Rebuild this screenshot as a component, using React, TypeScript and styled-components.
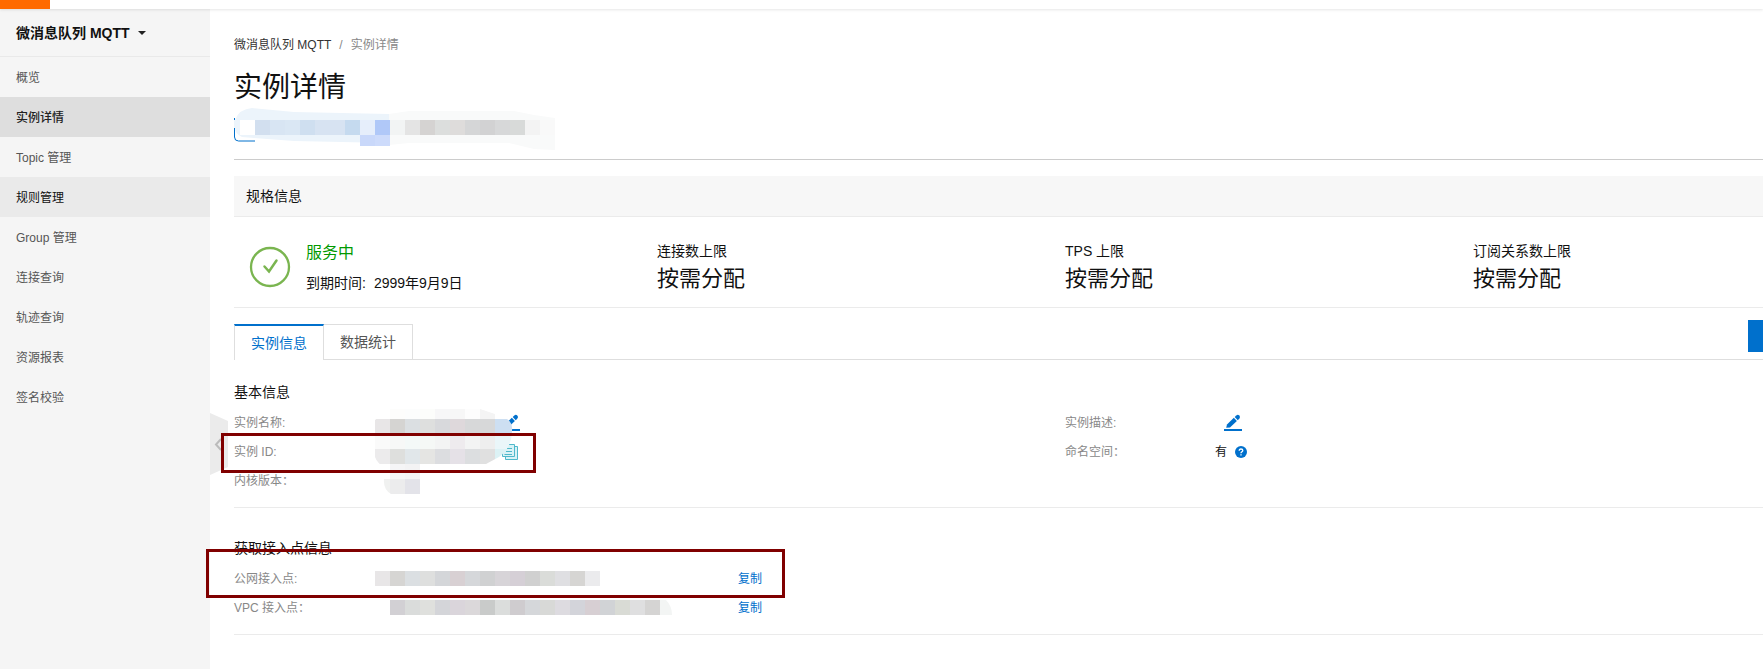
import React from "react";
import styled, { createGlobalStyle } from "styled-components";

const GlobalStyle = createGlobalStyle`
  * { box-sizing: border-box; }
  body {
    margin: 0;
    background: #fff;
    color: #111;
    font: 12px/20px "Liberation Sans", "Noto Sans CJK SC", sans-serif;
  }
  button { font: inherit; border: 0; padding: 0; background: none; cursor: pointer; }
  a { text-decoration: none; }
`;

const Page = styled.div`
  min-height: 100vh;
  display: flex;
  flex-direction: column;
  overflow: hidden;
`;

const TopBar = styled.header`
  height: 9px;
  flex: none;
  position: relative;
  z-index: 1;
  background: #fff;
  box-shadow: 0 1px 3px rgba(0, 0, 0, 0.1);
`;

const Brand = styled.div`
  width: 50px;
  height: 9px;
  background: #ff6a00;
`;

const Body = styled.div`
  flex: 1;
  display: flex;
  min-width: 1920px;
`;

const Sidebar = styled.nav`
  width: 210px;
  flex: none;
  background: #f5f5f5;
`;

const ProductSwitch = styled.button`
  width: 100%;
  height: 48px;
  padding: 0 16px;
  display: flex;
  align-items: center;
  gap: 8px;
  border-bottom: 1px solid #e9e9e9;
  color: #111;
  font-size: 14px;
  font-weight: 700;
`;

const NavLink = styled.a<{ $state?: "active" | "hover" }>`
  display: block;
  height: 40px;
  padding: 0 16px;
  line-height: 42px;
  color: ${(p) => (p.$state === "active" ? "#222" : p.$state ? "#111" : "#555")};
  font-weight: ${(p) => (p.$state === "active" ? 500 : 400)};
  background: ${(p) => (p.$state === "active" ? "#dedede" : p.$state ? "#eaeaea" : "none")};
`;

const Main = styled.main`
  flex: 1;
  min-width: 0;
  padding: 26px 24px 0;
  position: relative;
`;

const Collapse = styled.button`
  position: absolute;
  left: 0;
  top: 404px;
  width: 20px;
  height: 62px;
`;

const Breadcrumb = styled.nav`
  display: flex;
  gap: 8px;
  color: #888;
  a { color: #333; }
`;

const Title = styled.h1`
  margin: 14px 0 0;
  font-size: 28px;
  line-height: 38px;
  font-weight: 400;
`;

const InstanceBar = styled.div`
  height: 53px;
  border-bottom: 1px solid #ccc;
  svg { display: block; }
`;

const PanelTitle = styled.h2`
  margin: 16px 0 0;
  height: 41px;
  padding: 0 12px;
  background: #f7f7f7;
  border-bottom: 1px solid #ebebeb;
  font-size: 14px;
  line-height: 40px;
  font-weight: 400;
`;

const Stats = styled.section`
  display: grid;
  grid-template-columns: repeat(4, 1fr);
  height: 91px;
  padding: 24px 15px 0;
  border-bottom: 1px solid #ebebeb;
`;

const Status = styled.div`
  display: flex;
  gap: 15px;
  > svg { margin-top: 5px; flex: none; }
`;

const StatusName = styled.div`
  color: #090;
  font-size: 16px;
  line-height: 24px;
`;

const Expiry = styled.div`
  margin-top: 8px;
  font-size: 14px;
  line-height: 20px;
  display: flex;
  gap: 8px;
`;

const StatLabel = styled.div`
  font-size: 14px;
  line-height: 20px;
`;

const StatValue = styled.div`
  font-size: 22px;
  line-height: 36px;
`;

const TabBar = styled.div`
  margin-top: 12px;
  height: 40px;
  display: flex;
  justify-content: space-between;
  border-bottom: 1px solid #dedede;
`;

const TabList = styled.div`
  display: flex;
  margin-top: 4px;
`;

const Tab = styled.button<{ $active?: boolean }>`
  height: ${(p) => (p.$active ? 36 : 35)}px;
  padding: 0 16px 0 ${(p) => (p.$active ? 16 : 16)}px;
  font-size: 14px;
  color: ${(p) => (p.$active ? "#0070cc" : "#555")};
  background: #fff;
  border-right: 1px solid #dedede;
  border-left: ${(p) => (p.$active ? "1px solid #dedede" : "0")};
  border-top: ${(p) => (p.$active ? "2px solid #0070cc" : "1px solid #dedede")};
`;

const PrimaryButton = styled.button`
  width: 148px;
  height: 32px;
  background: #0070cc;
`;

const Section = styled.section<{ $gap: number }>`
  position: relative;
  padding: ${(p) => p.$gap}px 0 12px;
  border-bottom: 1px solid #ebebeb;
`;

const SectionTitle = styled.h3`
  margin: 0 0 6px;
  font-size: 14px;
  line-height: 20px;
  font-weight: 400;
`;

const InfoGrid = styled.dl`
  margin: 0;
  display: grid;
  grid-template-columns: 1fr 1fr;
`;

const EndpointList = styled.dl`
  margin: 0;
`;

const Field = styled.div`
  height: 29px;
  display: flex;
  align-items: center;
`;

const Label = styled.dt`
  width: 150px;
  flex: none;
  color: #888;
  line-height: 22px;
`;

const Value = styled.dd<{ $indent?: number }>`
  margin: 0;
  padding-left: ${(p) => p.$indent ?? 0}px;
  display: flex;
  align-items: center;
  gap: 8px;
`;

const IconButton = styled.button`
  display: flex;
`;

const EndpointLabel = styled(Label)`
  width: 141px;
`;

const Endpoint = styled.div`
  width: 355px;
  svg { display: block; }
`;

const CopyLink = styled.button`
  color: #0070cc;
`;

const Redaction = styled.svg`
  position: absolute;
  left: 141px;
  top: 49px;
  pointer-events: none;
`;

const Marker = styled.div<{ $x: number; $y: number; $w: number; $h: number }>`
  position: absolute;
  left: ${(p) => p.$x}px;
  top: ${(p) => p.$y}px;
  width: ${(p) => p.$w}px;
  height: ${(p) => p.$h}px;
  border: 3px solid #800000;
  pointer-events: none;
`;

const Cells = ({ x = 0, y, h = 15, colors }: { x?: number; y: number; h?: number; colors: string[] }) => (
  <g shapeRendering="crispEdges">
    {colors.map((c, i) => (
      <rect key={i} x={x + i * 15} y={y} width={15} height={h} fill={c} />
    ))}
  </g>
);

const Pencil = () => (
  <svg width="18" height="18" viewBox="0 0 18 18" fill="#0070cc" aria-hidden="true">
    <path d="M2.2 13.8 3 10.400 9.800 3.800 12.900 6.900 6 13.400Z" />
    <path d="M10.700 3.100 12.300 1.500Q13.900.2 15.300 1.600 16.700 3 15.400 4.600L13.800 6.200Z" />
    <rect y="15" width="18" height="2" />
  </svg>
);

const CopyIcon = () => (
  <svg width="16" height="16" viewBox="0 0 16 16" fill="#d9f2f6" stroke="#4fb9cb" aria-hidden="true">
    <path d="M6.500 2.500h9v13h-12v-4z" />
    <path d="M.5 4.500 4.500.5h8v12H.5z" />
    <path d="M5 4.500h5M4 7.500h6M2.500 10.500h7.500" fill="none" />
  </svg>
);

const navItems: { label: string; state?: "active" | "hover" }[] = [
  { label: "概览" },
  { label: "实例详情", state: "active" },
  { label: "Topic 管理" },
  { label: "规则管理", state: "hover" },
  { label: "Group 管理" },
  { label: "连接查询" },
  { label: "轨迹查询" },
  { label: "资源报表" },
  { label: "签名校验" },
];

const limits = ["连接数上限", "TPS 上限", "订阅关系数上限"];

export default function App() {
  return (
    <Page>
      <GlobalStyle />
      <TopBar>
        <Brand />
      </TopBar>
      <Body>
        <Sidebar>
          <ProductSwitch>
            微消息队列 MQTT
            <svg width="8" height="4" viewBox="0 0 8 4" aria-hidden="true">
              <path d="M0 0h8L4 4z" fill="#222" />
            </svg>
          </ProductSwitch>
          {navItems.map((n) => (
            <NavLink key={n.label} href="#" $state={n.state}>
              {n.label}
            </NavLink>
          ))}
        </Sidebar>
        <Main>
          <Collapse aria-label="收起菜单">
            <svg width="20" height="62" viewBox="0 0 20 62">
              <path d="M0 0 18 8V54L0 62z" fill="#ebebeb" />
              <path d="M11 26 6 31.500 11 37" fill="none" stroke="#bbb" strokeWidth="2" />
            </svg>
          </Collapse>
          <Breadcrumb>
            <a href="#">微消息队列 MQTT</a>
            <span>/</span>
            <span>实例详情</span>
          </Breadcrumb>
          <Title>实例详情</Title>
          <InstanceBar>
            <svg width="324" height="46" viewBox="0 0 324 46" aria-hidden="true">
              <path d="M.5 11v19q0 4 4 4H21" fill="none" stroke="#0070cc" />
              <path d="M0 13H1Q5 2 18 1L60 5 155 7V36L60 34 20 31 8 30Q1 27 1 21H0z" fill="#ecf4fb" />
              <path d="M155 7 175 4H280L300 8 321 11V43L300 42 275 36H175L155 38z" fill="#f9fafa" />
              <Cells x={6} y={13} colors={["#fff", "#d2dfef", "#d8e5f3", "#dae7f4", "#cfdff0", "#d7e3f2", "#d7e3f2", "#c5daef", "#e6eefb", "#b0c8f8", "#f2f4f4", "#e4e4e4", "#d5d3d2", "#dcdedd", "#dedcdb", "#d5d6d7", "#d2d2d3", "#d7d8d9", "#d8dad9", "#f3f3f3", "#f9f9f9"]} />
              <Cells x={126} y={28} h={11} colors={["#c9d8fa", "#cddbfb"]} />
            </svg>
          </InstanceBar>
          <PanelTitle>规格信息</PanelTitle>
          <Stats>
            <Status>
              <svg width="42" height="42" viewBox="0 0 42 42" fill="none" stroke="#7ab550" aria-hidden="true">
                <circle cx="21" cy="21" r="19" strokeWidth="2.300" />
                <path d="M15.500 20.500 20 25.500 27.500 14.500" strokeWidth="2.500" strokeLinecap="round" />
              </svg>
              <div>
                <StatusName>服务中</StatusName>
                <Expiry>
                  <span>到期时间:</span>
                  <span>2999年9月9日</span>
                </Expiry>
              </div>
            </Status>
            {limits.map((l) => (
              <div key={l}>
                <StatLabel>{l}</StatLabel>
                <StatValue>按需分配</StatValue>
              </div>
            ))}
          </Stats>
          <TabBar>
            <TabList role="tablist">
              <Tab role="tab" aria-selected="true" $active>
                实例信息
              </Tab>
              <Tab role="tab" aria-selected="false">
                数据统计
              </Tab>
            </TabList>
            <PrimaryButton aria-label="操作" />
          </TabBar>
          <Section $gap={22}>
            <SectionTitle>基本信息</SectionTitle>
            <InfoGrid>
              <Field>
                <Label>实例名称:</Label>
                <Value $indent={118}>
                  <IconButton aria-label="编辑实例名称">
                    <Pencil />
                  </IconButton>
                </Value>
              </Field>
              <Field>
                <Label>实例描述:</Label>
                <Value $indent={9}>
                  <IconButton aria-label="编辑实例描述">
                    <Pencil />
                  </IconButton>
                </Value>
              </Field>
              <Field>
                <Label>实例 ID:</Label>
                <Value $indent={118}>
                  <IconButton aria-label="复制实例 ID">
                    <CopyIcon />
                  </IconButton>
                </Value>
              </Field>
              <Field>
                <Label>命名空间：</Label>
                <Value>
                  有
                  <svg width="12" height="12" viewBox="0 0 12 12" aria-hidden="true">
                    <circle cx="6" cy="6" r="6" fill="#0070cc" />
                    <path d="M4.200 4.700Q4.200 3 6 3T7.800 4.600Q7.800 5.400 6.800 5.900 6 6.300 6 7.200M6 8.200V9.400" fill="none" stroke="#fff" strokeWidth="1.300" />
                  </svg>
                </Value>
              </Field>
              <Field>
                <Label>内核版本：</Label>
              </Field>
            </InfoGrid>
            <Redaction width="150" height="92" viewBox="0 0 150 92" aria-hidden="true">
              <clipPath id="blob">
                <path d="M0 11 15 0H105L120 5 132 10Q138 14 137 22 137 38 124 48L111 55H45V85H16Q8 80 9 70L11 60Q2 54 0 48z" />
              </clipPath>
              <g clipPath="url(#blob)">
                <Cells y={0} h={10} colors={["#fff", "#fdfdfc", "#fcfdfd", "#fcfdfb", "#f7f7f8", "#f7f7f7", "#fdfdfd", "#f4f4f4", "#fff"]} />
                <Cells y={10} colors={["#e8e6e7", "#d5d4d2", "#dbdfe2", "#dedfde", "#d8d9dc", "#ded8db", "#d7d8d9", "#d7d8d9", "#cddff2", "#cddff2"]} />
                <Cells y={25} colors={["#fafafa", "#f7f8f7", "#f4f9f8", "#f5f8f6", "#f3f4f4", "#eeebee", "#f3f4f4", "#eeeeee", "#eaf6f9", "#eaf6f9"]} />
                <Cells y={40} colors={["#ecebec", "#dedfdd", "#e1e7ea", "#e5e5e3", "#dcdde0", "#e5e1e7", "#dcdee0", "#e0e0e0", "#dcf2f5", "#dcf2f5"]} />
                <Cells y={55} colors={["#fff", "#f5f5f6", "#f3f3f4"]} />
                <Cells y={70} colors={["#f0f1f0", "#ececed", "#e3e3e9"]} />
              </g>
            </Redaction>
          </Section>
          <Section $gap={30}>
            <SectionTitle>获取接入点信息</SectionTitle>
            <EndpointList>
              <Field>
                <EndpointLabel>公网接入点:</EndpointLabel>
                <Value>
                  <Endpoint>
                    <svg width="225" height="15" aria-hidden="true">
                      <Cells y={0} colors={["#e8e6e7", "#d6d5d3", "#dbdfe2", "#dedfde", "#d4d6d9", "#d8d0d3", "#d5d7da", "#d0d1d2", "#d7d4d8", "#d5cfd6", "#d0d0d0", "#dadcd9", "#dfdfe2", "#d6d5d3", "#ebebed"]} />
                    </svg>
                  </Endpoint>
                  <CopyLink>复制</CopyLink>
                </Value>
              </Field>
              <Field>
                <EndpointLabel>VPC 接入点：</EndpointLabel>
                <Value>
                  <Endpoint>
                    <svg width="297" height="15" aria-hidden="true">
                      <path d="M285 0h6q6 6 6 15h-12z" fill="#f3f5f4" />
                      <Cells x={15} y={0} colors={["#d2d0d4", "#dadcdb", "#dfe0dd", "#d4d5d9", "#dad5db", "#dbd8da", "#c9cbca", "#dbdddc", "#cfcccf", "#d5d7da", "#d8d9d7", "#dddbe0", "#d3d4da", "#d7cfd3", "#d1d3d6", "#d9dbd5", "#dfdfe0", "#d5d4d3"]} />
                    </svg>
                  </Endpoint>
                  <CopyLink>复制</CopyLink>
                </Value>
              </Field>
            </EndpointList>
          </Section>
          <Marker $x={11} $y={424} $w={315} $h={40} />
          <Marker $x={-4} $y={540} $w={579} $h={49} />
        </Main>
      </Body>
    </Page>
  );
}
